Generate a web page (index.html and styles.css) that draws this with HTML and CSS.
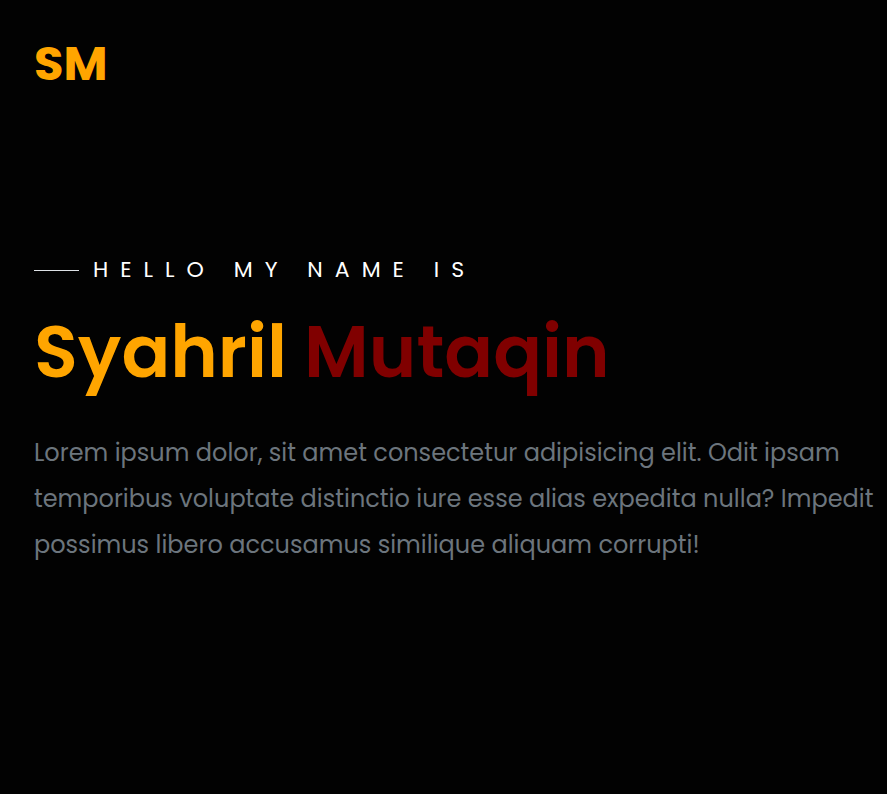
FILE: index.html
```html
<!DOCTYPE html>
<html lang="en">
<head>
<meta charset="utf-8">
<meta name="viewport" content="width=device-width, initial-scale=1">
<title>Syahril Mutaqin</title>
<link rel="stylesheet" href="styles.css">
</head>
<body>
<header class="header"><a class="logo" href="#home">SM</a></header>
<main class="hero" id="home">
<p class="intro">Hello my name is</p>
<h1 class="name">Syahril <span class="surname">Mutaqin</span></h1>
<p class="about">Lorem ipsum dolor, sit amet consectetur adipisicing elit. Odit ipsam temporibus voluptate distinctio iure esse alias expedita nulla? Impedit possimus libero accusamus similique aliquam corrupti!</p>
</main>
</body>
</html>
```
FILE: styles.css
```css
* { box-sizing: border-box; margin: 0; }
body {
  min-height: 100vh;
  background: #020202;
  color: #fff;
  font-family: Poppins, "Open Sans", sans-serif;
}
.header { padding: 28px 34px; }
.logo {
  color: orange;
  font-size: 48px;
  line-height: 72px;
  font-weight: 700;
  text-decoration: none;
}
.hero { padding: 124px 8px 0 34px; }
.intro {
  display: flex;
  align-items: center;
  gap: 14px;
  font-size: 22px;
  line-height: 36px;
  font-weight: 400;
  letter-spacing: 12px;
  text-transform: uppercase;
}
.intro::before {
  content: "";
  width: 45px;
  height: 1px;
  background: #dee2e6;
}
.name {
  margin: 14px 0 28px;
  color: orange;
  font-size: 72px;
  line-height: 100px;
  font-weight: 600;
}
.surname { color: #800000; }
.about {
  color: #6c757d;
  font-size: 24px;
  line-height: 46px;
}
```
